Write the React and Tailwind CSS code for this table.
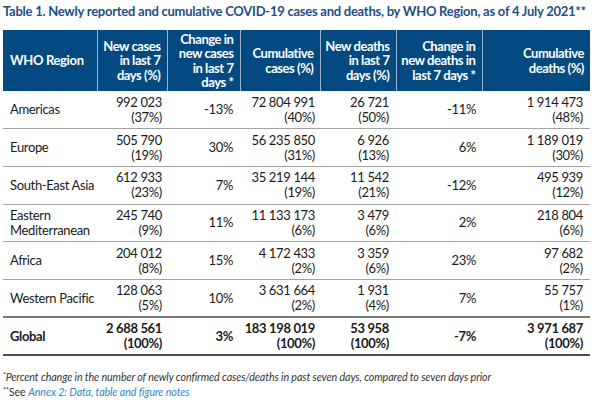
import React from 'react';

const rows = [
  { region: ['Americas'], cases: '992 023', casesPct: '(37%)', change: '-13%', cum: '72 804 991', cumPct: '(40%)', deaths: '26 721', deathsPct: '(50%)', dChange: '-11%', cumD: '1 914 473', cumDPct: '(48%)' },
  { region: ['Europe'], cases: '505 790', casesPct: '(19%)', change: '30%', cum: '56 235 850', cumPct: '(31%)', deaths: '6 926', deathsPct: '(13%)', dChange: '6%', cumD: '1 189 019', cumDPct: '(30%)' },
  { region: ['South-East Asia'], cases: '612 933', casesPct: '(23%)', change: '7%', cum: '35 219 144', cumPct: '(19%)', deaths: '11 542', deathsPct: '(21%)', dChange: '-12%', cumD: '495 939', cumDPct: '(12%)' },
  { region: ['Eastern', 'Mediterranean'], cases: '245 740', casesPct: '(9%)', change: '11%', cum: '11 133 173', cumPct: '(6%)', deaths: '3 479', deathsPct: '(6%)', dChange: '2%', cumD: '218 804', cumDPct: '(6%)' },
  { region: ['Africa'], cases: '204 012', casesPct: '(8%)', change: '15%', cum: '4 172 433', cumPct: '(2%)', deaths: '3 359', deathsPct: '(6%)', dChange: '23%', cumD: '97 682', cumDPct: '(2%)' },
  { region: ['Western Pacific'], cases: '128 063', casesPct: '(5%)', change: '10%', cum: '3 631 664', cumPct: '(2%)', deaths: '1 931', deathsPct: '(4%)', dChange: '7%', cumD: '55 757', cumDPct: '(1%)' },
];

// header lines broken as in the report
const headers = [
  ['New cases', 'in last 7', 'days (%)'],
  ['Change in', 'new cases', 'in last 7', 'days *'],
  ['Cumulative', 'cases (%)'],
  ['New deaths', 'in last 7', 'days (%)'],
  ['Change in', 'new deaths in', 'last 7 days *'],
  ['Cumulative', 'deaths (%)'],
];

const Two = ({ a, b }) => (
  <div className="flex flex-col items-end">
    <span>{a}</span>
    <span>{b}</span>
  </div>
);

export default function App() {
  return (
    <div className="w-[602px] h-[405px] bg-white text-[#1a1a1a] font-['Lato','Liberation_Sans',sans-serif] pl-[3px] pt-[3px]">
      <div className="text-[#1f4e87] font-bold text-[13px] leading-[16px] tracking-[-0.25px] whitespace-nowrap">
        Table 1. Newly reported and cumulative COVID-19 cases and deaths, by WHO Region, as of 4 July 2021**
      </div>

      <table className="table-fixed border-collapse w-[587px] mt-[11px] text-[13px] leading-[15px] tracking-[-0.35px] whitespace-nowrap">
        <colgroup>
          <col className="w-[94px]" />
          <col className="w-[70px]" />
          <col className="w-[73px]" />
          <col className="w-[80px]" />
          <col className="w-[76px]" />
          <col className="w-[86px]" />
          <col className="w-[108px]" />
        </colgroup>
        <thead>
          <tr className="h-[61px] bg-[#044a80] text-white font-bold">
            <th className="text-left align-middle pl-[7px] font-bold">WHO Region</th>
            {headers.map((h, i) => (
              <th key={i} className="text-right align-middle pr-[6px] font-bold border-l border-[#9fb4cc] leading-[14.5px] tracking-[-0.45px]">
                {h.map((line) => (
                  <div key={line}>{line}</div>
                ))}
              </th>
            ))}
          </tr>
        </thead>
        <tbody>
          {rows.map((r, i) => (
            <tr key={r.region[0]} className={`h-[37.7px] ${i < rows.length - 1 ? 'border-b-[1.5px] border-[#a3a3a3]' : 'border-b-2 border-[#7a7a7a]'}`}>
              <td className="text-left align-middle pl-[7px]">
                {r.region.map((line) => (
                  <div key={line}>{line}</div>
                ))}
              </td>
              <td className="align-middle pr-[5px]"><Two a={r.cases} b={r.casesPct} /></td>
              <td className="align-middle text-right pr-[7px]">{r.change}</td>
              <td className="align-middle pr-[5px]"><Two a={r.cum} b={r.cumPct} /></td>
              <td className="align-middle pr-[7px]"><Two a={r.deaths} b={r.deathsPct} /></td>
              <td className="align-middle text-right pr-[6px]">{r.dChange}</td>
              <td className="align-middle pr-[7px]"><Two a={r.cumD} b={r.cumDPct} /></td>
            </tr>
          ))}
          <tr className="h-[38px] border-b-[2.5px] border-[#4d4d4d] font-bold">
            <td className="text-left align-middle pl-[7px]">Global</td>
            <td className="align-middle pr-[5px]"><Two a="2 688 561" b="(100%)" /></td>
            <td className="align-middle text-right pr-[7px]">3%</td>
            <td className="align-middle pr-[5px]"><Two a="183 198 019" b="(100%)" /></td>
            <td className="align-middle pr-[7px]"><Two a="53 958" b="(100%)" /></td>
            <td className="align-middle text-right pr-[6px]">-7%</td>
            <td className="align-middle pr-[7px]"><Two a="3 971 687" b="(100%)" /></td>
          </tr>
        </tbody>
      </table>

      <div className="mt-[13px] text-[10.7px] leading-[15px] italic text-[#333] tracking-[-0.1px]">
        <div>
          <sup className="text-[7px]">*</sup>Percent change in the number of newly confirmed cases/deaths in past seven days, compared to seven days prior
        </div>
        <div>
          <sup className="not-italic text-[7px]">**</sup><span className="not-italic">See </span>
          <span className="text-[#2f86c9]">Annex 2: Data, table and figure notes</span>
        </div>
      </div>
    </div>
  );
}
